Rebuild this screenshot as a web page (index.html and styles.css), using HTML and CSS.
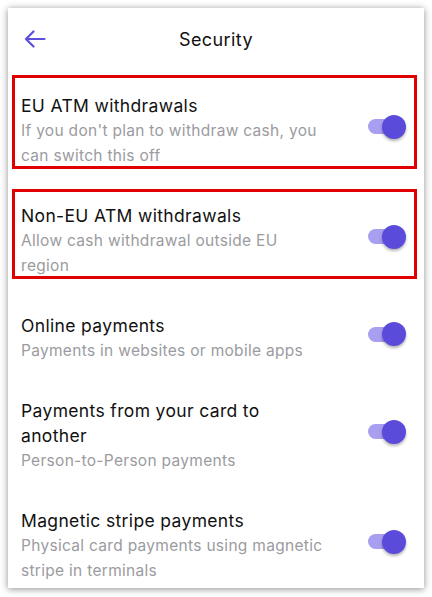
FILE: index.html
```html
<!DOCTYPE html>
<html lang="en">
<head>
	<meta charset="utf-8"/>
	<title>Security</title>
	<link rel="stylesheet" href="styles.css">
</head>
<body>

<div id="screen">
	<div id="header">
		<a class="back" href="#">
			<svg width="22" height="18" viewBox="0 0 22 18"><path d="M20.5 9H2 M9.5 1.5L2 9l7.5 7.5" fill="none" stroke="#5b4fdc" stroke-width="2.2" stroke-linecap="round" stroke-linejoin="round"/></svg>
		</a>
		<h1>Security</h1>
		<span></span>
	</div>

	<ul id="settings">
		<li>
			<div class="text">
				<h2>EU ATM withdrawals</h2>
				<p>If you don't plan to withdraw cash, you can switch this off</p>
			</div>
			<span class="switch on"></span>
		</li>
		<li>
			<div class="text">
				<h2>Non-EU ATM withdrawals</h2>
				<p>Allow cash withdrawal outside EU region</p>
			</div>
			<span class="switch on"></span>
		</li>
		<li>
			<div class="text">
				<h2>Online payments</h2>
				<p>Payments in websites or mobile apps</p>
			</div>
			<span class="switch on"></span>
		</li>
		<li>
			<div class="text">
				<h2>Payments from your card to another</h2>
				<p>Person-to-Person payments</p>
			</div>
			<span class="switch on"></span>
		</li>
		<li>
			<div class="text">
				<h2>Magnetic stripe payments</h2>
				<p>Physical card payments using magnetic stripe in terminals</p>
			</div>
			<span class="switch on"></span>
		</li>
	</ul>

	<div class="mark first"></div>
	<div class="mark second"></div>
</div>

</body>
</html>
```

FILE: styles.css
```css
body {
	background: #fff;
	color: #111;
	font-family: Inter, 'Noto Sans', sans-serif;
	margin: 0;
	padding: 8px;
}

#screen {
	position: relative;
	width: 416px;
	height: 580px;
	overflow: hidden;
	background: #fff;
	box-shadow: 0 1px 7px rgba(0, 0, 0, 0.45);
}

#header {
	display: grid;
	grid-template-columns: 1fr auto 1fr;
	align-items: center;
	height: 62px;
	padding: 0 16px;
	margin-bottom: 5px;
}

#header .back {
	display: flex;
}

h1 {
	font-size: 18px;
	font-weight: normal;
	letter-spacing: 0.4px;
	margin: 0;
}

#settings {
	list-style: none;
	margin: 0;
	padding: 0;
}

#settings li {
	display: flex;
	align-items: center;
	padding: 17.5px 18px 17.5px 13px;
}

.text {
	flex: 1;
	max-width: 305px;
}

h2 {
	font-size: 17.5px;
	font-weight: normal;
	line-height: 25px;
	letter-spacing: 0.35px;
	margin: 0;
}

.text p {
	font-size: 15.5px;
	line-height: 25px;
	letter-spacing: 0.3px;
	color: #9b9ba0;
	margin: 0;
}

.switch {
	position: relative;
	flex: none;
	width: 38px;
	height: 24px;
	margin-left: auto;
	margin-bottom: 7px;
}

.switch::before {
	content: "";
	position: absolute;
	left: 0;
	top: 4.5px;
	width: 34px;
	height: 15px;
	border-radius: 8px;
	background: #a89ff0;
}

.switch::after {
	content: "";
	position: absolute;
	right: 0;
	top: 0;
	width: 24px;
	height: 24px;
	border-radius: 50%;
	background: #5b4bdb;
	box-shadow: 0 2px 3px rgba(0, 0, 0, 0.3);
}

.mark {
	position: absolute;
	left: 4px;
	width: 405px;
	border: 3px solid #e00000;
	box-sizing: border-box;
}

.mark.first {
	top: 67px;
	height: 94px;
}

.mark.second {
	top: 181px;
	height: 90px;
}
```
